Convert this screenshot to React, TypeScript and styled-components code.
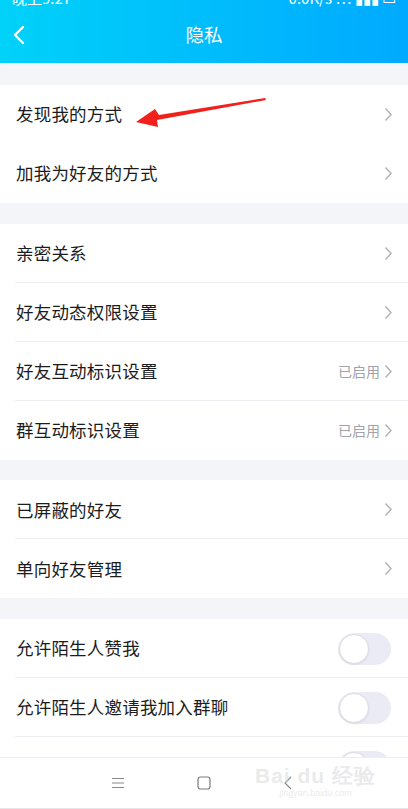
import React, { useState } from "react"
import styled, { createGlobalStyle } from "styled-components"

const GlobalStyle = createGlobalStyle`
    html, body {
        margin: 0;
        padding: 0;
        background: #f4f5f9;
    }
    body {
        font-family: "Noto Sans CJK SC", "Noto Sans", Roboto, sans-serif;
        -webkit-font-smoothing: antialiased;
    }
`

const Screen = styled.div`
    position: relative;
    width: 408px;
    height: 809px;
    overflow: hidden;
    background: #f4f5f9;
    display: flex;
    flex-direction: column;
`

const Header = styled.div`
    background: linear-gradient(90deg, #00d2f9 0%, #00bdfc 50%, #00aaff 100%);
    color: #fff;
    flex: none;
`

// only the lower edge of the status bar is in the shot
const StatusBar = styled.div`
    height: 9px;
    overflow: hidden;
    display: flex;
    justify-content: space-between;
    padding: 0 12px;
    font-size: 15px;
    line-height: 15px;
    span {
        margin-top: -10px;
    }
`

const TitleBar = styled.div`
    height: 54px;
    display: flex;
    align-items: center;
    justify-content: center;
    position: relative;
    .back {
        position: absolute;
        left: 12px;
        top: 16px;
    }
    h1 {
        margin: 0;
        font-size: 18.5px;
        font-weight: 400;
        margin-top: -4px;
    }
`

const Content = styled.div`
    flex: 1;
    padding-top: 22px;
    display: flex;
    flex-direction: column;
    gap: 20.7px;
`

const Section = styled.div`
    background: #fff;
`

const Row = styled.div<{ $divider?: boolean }>`
    height: 59px;
    display: flex;
    align-items: center;
    padding: 0 15px 0 16px;
    position: relative;
    &::after {
        content: "";
        display: ${({ $divider }) => ($divider ? "block" : "none")};
        position: absolute;
        left: 15px;
        right: 0;
        bottom: 0;
        height: 1px;
        background: #efeff3;
    }
`

const Label = styled.span`
    flex: 1;
    font-size: 17.5px;
    color: #1c1c1e;
    letter-spacing: 0.2px;
    margin-top: -1.5px;
`

const Value = styled.span`
    font-size: 14px;
    color: #a2a2a8;
    margin-right: 4px;
`

const Toggle = styled.button<{ $on: boolean }>`
    width: 53px;
    height: 32px;
    border-radius: 16px;
    border: none;
    padding: 0;
    background: ${({ $on }) => ($on ? "#00b4ff" : "#ebebf5")};
    position: relative;
    margin-right: 2px;
    &::after {
        content: "";
        position: absolute;
        top: 1px;
        left: ${({ $on }) => ($on ? "22px" : "1px")};
        width: 28px;
        height: 28px;
        border-radius: 50%;
        background: #fff;
        border: 1px solid #dcdce4;
        box-shadow: 0 1px 2px rgba(0, 0, 0, 0.08);
    }
`

const NavBar = styled.div`
    position: absolute;
    left: 0;
    right: 0;
    bottom: 0;
    height: 50px;
    background: #fff;
    border-top: 1px solid #efeff2;
    border-bottom: 1px solid #e6e6ea;
    display: flex;
    align-items: center;
    justify-content: center;
    gap: 72px;
    padding-right: 4px;
`

const Watermark = styled.div`
    position: absolute;
    right: 32px;
    bottom: 10px;
    color: rgba(214, 214, 218, 0.5);
    font-family: "Liberation Sans", sans-serif;
    text-align: center;
    line-height: 1;
    b {
        font-size: 21px;
        font-weight: 700;
        letter-spacing: 1px;
    }
    small {
        display: block;
        font-size: 9px;
        margin-top: 3px;
    }
`

const Arrow = styled.svg`
    position: absolute;
    left: 134px;
    top: 95px;
`

const Chevron = () => (
    <svg width="9" height="15" viewBox="0 0 9 15">
        <path d="M1.5 1.5 L7 7.5 L1.5 13.5" fill="none" stroke="#b1b1b6" strokeWidth="1.4" />
    </svg>
)

type Item = { label: string; value?: string; toggle?: boolean }

const sections: Item[][] = [
    [{ label: "发现我的方式" }, { label: "加我为好友的方式" }],
    [
        { label: "亲密关系" },
        { label: "好友动态权限设置" },
        { label: "好友互动标识设置", value: "已启用" },
        { label: "群互动标识设置", value: "已启用" },
    ],
    [{ label: "已屏蔽的好友" }, { label: "单向好友管理" }],
    [
        { label: "允许陌生人赞我", toggle: true },
        { label: "允许陌生人邀请我加入群聊", toggle: true },
        { label: "允许陌生人查看我的资料", toggle: true },
    ],
]

export default function App() {
    const [toggles, setToggles] = useState<Record<string, boolean>>({})

    return (
        <Screen>
            <GlobalStyle />
            <Header>
                <StatusBar>
                    <span>晚上9:27</span>
                    <span>0.0K/s ⋯ ▮▮▮ ▭</span>
                </StatusBar>
                <TitleBar>
                    <svg className="back" width="14" height="20" viewBox="0 0 14 20">
                        <path d="M11 2 L3 10 L11 18" fill="none" stroke="#fff" strokeWidth="2.4" strokeLinecap="round" strokeLinejoin="round" />
                    </svg>
                    <h1>隐私</h1>
                </TitleBar>
            </Header>
            <Content>
                {sections.map((items, si) => (
                    <Section key={si}>
                        {items.map((it, i) => (
                            <Row key={it.label} $divider={si > 0 && i < items.length - 1}>
                                <Label>{it.label}</Label>
                                {it.value && <Value>{it.value}</Value>}
                                {it.toggle ? (
                                    <Toggle
                                        $on={!!toggles[it.label]}
                                        onClick={() => setToggles(t => ({ ...t, [it.label]: !t[it.label] }))}
                                    />
                                ) : (
                                    <Chevron />
                                )}
                            </Row>
                        ))}
                    </Section>
                ))}
            </Content>
            <Arrow width="134" height="34" viewBox="0 0 134 34">
                <path d="M131 3 L25 20 L21 14 L2 27 L24 32 L23 25 L132 5 Z" fill="#f0201c" />
            </Arrow>
            <NavBar>
                <svg width="14" height="12" viewBox="0 0 14 12">
                    <path d="M1 1.5 H13 M1 6 H13 M1 10.5 H13" stroke="#8a8a8e" strokeWidth="1" />
                </svg>
                <svg width="14" height="14" viewBox="0 0 14 14">
                    <rect x="1" y="1" width="12" height="12" rx="2.5" fill="none" stroke="#7c7c80" strokeWidth="1.2" />
                </svg>
                <svg width="10" height="16" viewBox="0 0 10 16">
                    <path d="M8 2 L2 8 L8 14" fill="none" stroke="#8a8a8e" strokeWidth="1.2" />
                </svg>
                <Watermark>
                    <b>Bai du 经验</b>
                    <small>jingyan.baidu.com</small>
                </Watermark>
            </NavBar>
        </Screen>
    )
}
